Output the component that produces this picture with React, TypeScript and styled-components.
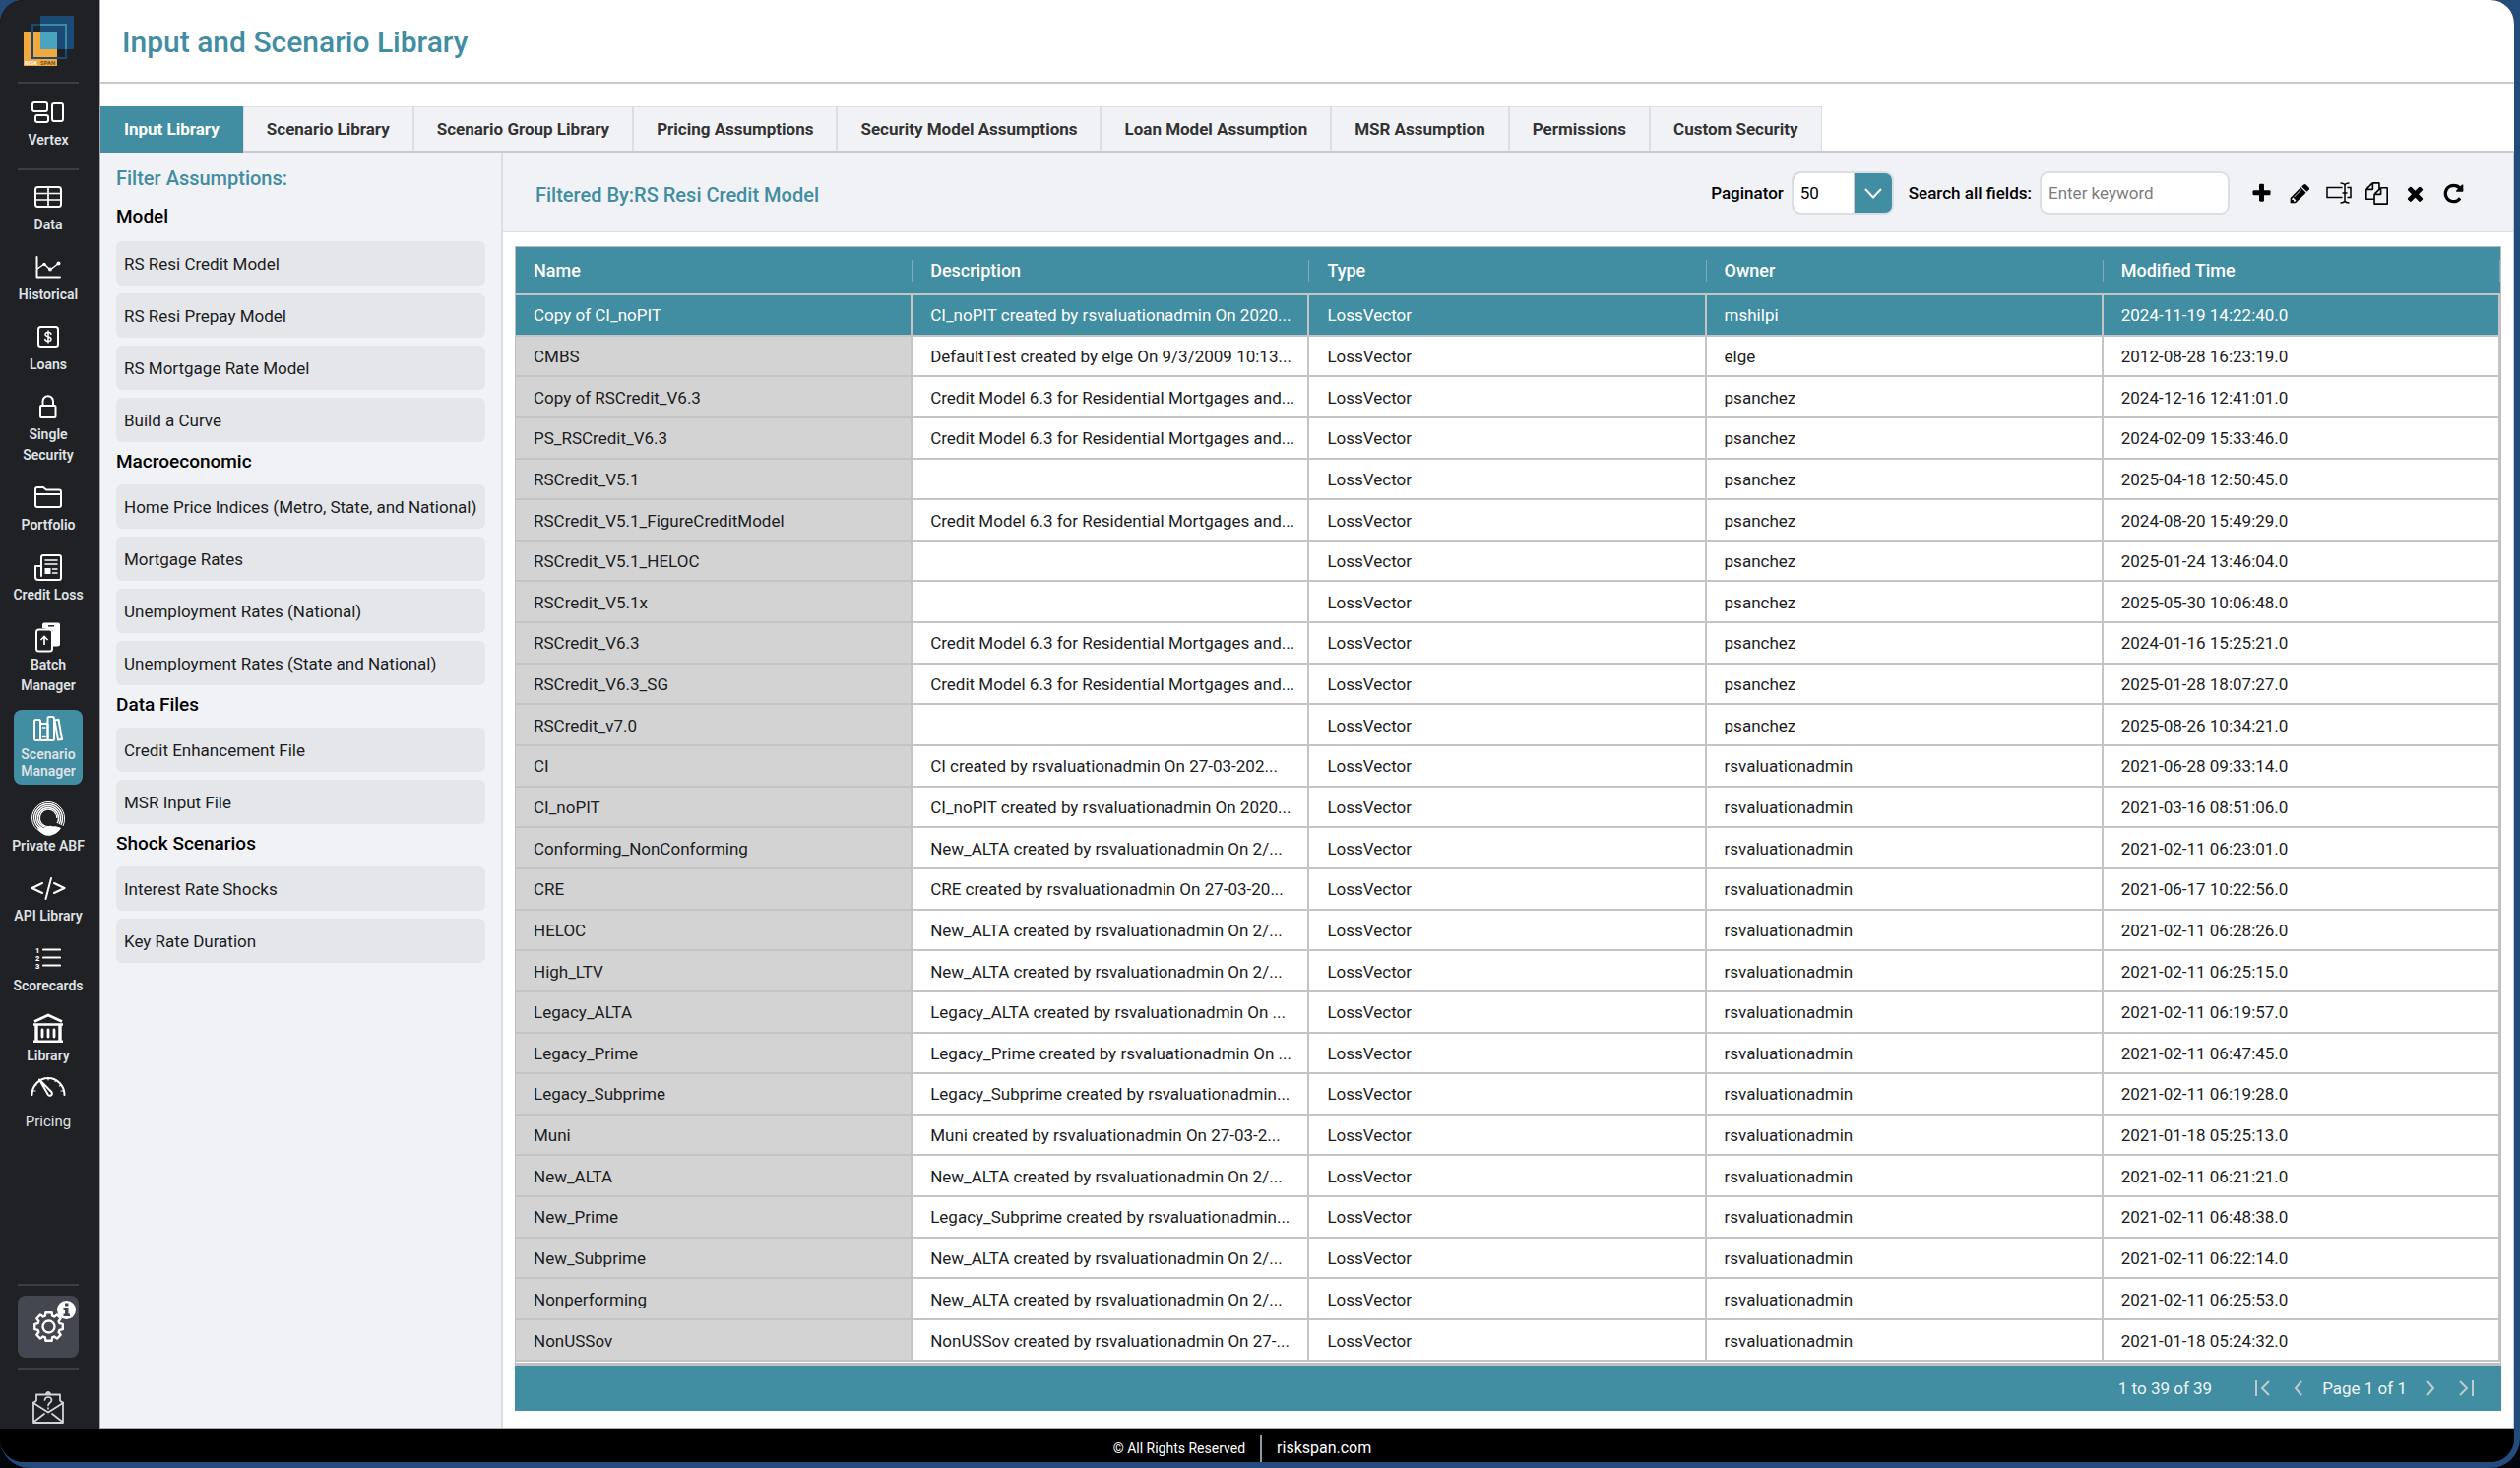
import React from "react";
import styled, { createGlobalStyle, css } from "styled-components";

const teal = "#418da1";
const panel = "#f1f2f6";
const line = "#dcdee6";
const rule = "#cacaca";
const grid = "#c4c4c4";
const ink = "#1b1c1e";

const GlobalStyle = createGlobalStyle`
  *, *::before, *::after { box-sizing: border-box; }
  body { margin: 0; background: #03050c; font-family: Roboto, "Noto Sans", sans-serif; color: ${ink}; }
  button, input, select { font: inherit; color: inherit; }
  a { color: inherit; text-decoration: none; }
  h1, h2, h3, ul { margin: 0; padding: 0; }
  ul { list-style: none; }
`;

const Desktop = styled.div`
  height: 100vh;
  padding-right: 6px;
  padding-bottom: 6px;
  background: #234b7c;
  border-radius: 0 0 30px 30px;
`;

const Shell = styled.div`
  height: 100%;
  display: flex;
  flex-direction: column;
  overflow: hidden;
  border-radius: 24px;
  background: #000;
`;

const Columns = styled.div`
  flex: 1;
  min-height: 0;
  display: flex;
`;

/* ---------- Sidebar ---------- */

const Sidebar = styled.nav`
  flex: none;
  width: 101px;
  padding: 16px 3px 4px 0;
  display: flex;
  flex-direction: column;
  align-items: center;
  background: #202125;
  color: #dfe1e5;
`;

const Divider = styled.hr<{ $top: number; $bottom: number }>`
  width: 62px;
  height: 2px;
  border: 0;
  background: #3b3d42;
  margin: ${(p) => p.$top}px 0 ${(p) => p.$bottom}px;
`;

const NavItem = styled.a<{ $active?: boolean; $plain?: boolean }>`
  display: flex;
  flex-direction: column;
  align-items: center;
  margin-bottom: 14px;
  text-align: center;
  font-size: 14px;
  line-height: 21px;
  font-weight: 600;
  white-space: pre-line;
  ${(p) =>
    p.$plain &&
    css`
      margin-top: -4px;
      font-size: 15px;
      font-weight: 400;
    `}
  ${(p) =>
    p.$active &&
    css`
      width: 70px;
      margin-bottom: 16px;
      padding: 1px 0 5px;
      line-height: 17px;
      border-radius: 8px;
      background: ${teal};
    `}
`;

const NavIcon = styled.span`
  height: 36px;
  display: flex;
  align-items: center;
  justify-content: center;
  color: #fff;
`;

const Spacer = styled.div`
  flex: 1;
`;

const GearButton = styled.button`
  position: relative;
  width: 62px;
  height: 63px;
  padding: 0;
  border: 0;
  border-radius: 8px;
  background: #44474f;
  color: #fff;
  display: grid;
  place-items: center;
`;

const InfoBadge = styled.span`
  position: absolute;
  top: 5px;
  right: 3px;
  display: block;
  height: 19px;
`;

const MailLink = styled.a`
  display: block;
  height: 34px;
  color: #d2d4d6;
`;

/* ---------- Page ---------- */

const Page = styled.div`
  flex: 1;
  min-width: 0;
  display: flex;
  flex-direction: column;
  background: #fff;
  border-left: 1px solid #a9a9ab;
  border-bottom: 1px solid #a9a9ab;
`;

const Header = styled.header`
  height: 85px;
  padding: 2px 22px 0;
  display: flex;
  align-items: center;
  border-bottom: 2px solid ${rule};
`;

const Title = styled.h1`
  font-size: 30px;
  line-height: 36px;
  font-weight: 500;
  color: ${teal};
`;

const Tabs = styled.div`
  margin-top: 23px;
  display: flex;
  border-bottom: 2px solid ${rule};
`;

const Tab = styled.button<{ $active?: boolean }>`
  height: 45px;
  padding: 0 23px;
  border: 1px solid ${line};
  border-bottom: 0;
  background: ${panel};
  color: #333;
  font-size: 17px;
  font-weight: 700;
  ${(p) =>
    p.$active &&
    css`
      height: 47px;
      margin-bottom: -2px;
      padding-bottom: 2px;
      border-color: ${teal};
      background: ${teal};
      color: #fff;
    `}
`;

const Body = styled.div`
  flex: 1;
  min-height: 0;
  display: flex;
`;

const Filters = styled.aside`
  flex: none;
  width: 409px;
  padding: 9px 16px 0;
  background: ${panel};
  border-right: 2px solid ${line};
`;

const FiltersTitle = styled.h2`
  font-size: 20px;
  line-height: 34px;
  font-weight: 500;
  color: ${teal};
`;

const GroupTitle = styled.h3`
  margin-bottom: 3px;
  font-size: 19px;
  line-height: 40px;
  font-weight: 500;
  color: #000;
  &:first-of-type { line-height: 44px; }
`;

const FilterList = styled.ul`
  display: grid;
  gap: 8px;
`;

const FilterButton = styled.button`
  display: block;
  width: 375px;
  height: 45px;
  padding: 0 8px;
  border: 0;
  border-radius: 6px;
  background: #e5e6e9;
  text-align: left;
  font-size: 17px;
`;

const Main = styled.main`
  flex: 1;
  min-width: 0;
  display: flex;
  flex-direction: column;
  border-right: 1px solid ${rule};
`;

const Toolbar = styled.div`
  height: 81px;
  padding: 2px 48px 0 33px;
  display: flex;
  align-items: center;
  background: ${panel};
  border-bottom: 1px solid ${line};
`;

const ToolbarTitle = styled.h2`
  flex: 1;
  padding-top: 3px;
  font-size: 20px;
  font-weight: 500;
  color: ${teal};
`;

const FieldLabel = styled.label`
  margin-right: 8px;
  font-size: 17px;
  font-weight: 500;
  color: #000;
`;

const SelectBox = styled.div`
  display: flex;
  width: 104px;
  height: 44px;
  margin-right: 15px;
  overflow: hidden;
  border: 2px solid ${line};
  border-radius: 9px;
  background: ${teal};
`;

const Select = styled.select`
  width: 62px;
  padding: 0 7px;
  border: 0;
  border-right: 1px solid ${rule};
  appearance: none;
  background: #fff;
  color: #000;
  font-size: 17px;
`;

const SelectArrow = styled.span`
  flex: 1;
  display: grid;
  place-items: center;
  color: #fff;
`;

const SearchInput = styled.input`
  width: 193px;
  height: 44px;
  margin-right: 20px;
  padding: 0 7px;
  border: 2px solid ${line};
  border-radius: 9px;
  background: #fff;
  font-size: 17px;
  &::placeholder { color: #7d7d7d; opacity: 1; }
`;

const Actions = styled.div`
  display: flex;
  gap: 14px;
`;

const IconButton = styled.button`
  width: 25px;
  height: 25px;
  padding: 0;
  border: 0;
  background: none;
  color: #000;
  display: grid;
  place-items: center;
`;

const GridArea = styled.div`
  flex: 1;
  min-height: 0;
  padding: 14px 12px 17px;
  display: flex;
  flex-direction: column;
`;

const GridBox = styled.div`
  flex: 1;
  min-height: 0;
  padding-bottom: 1px;
  border: 1px solid #b9bdbf;
  border-bottom: 3px solid #bfc0c0;
`;

const Table = styled.table`
  width: 100%;
  height: 100%;
  border-collapse: separate;
  border-spacing: 0;
  table-layout: fixed;
  font-size: 17px;
  line-height: 22px;
`;

const HeadCell = styled.th`
  height: 49px;
  padding: 0;
  background: ${teal};
  border-bottom: 2px solid ${grid};
  color: #fff;
  font-size: 18px;
  font-weight: 500;
  text-align: left;
`;

const HeadLabel = styled.span`
  display: block;
  padding-left: 18px;
  border-right: 1px solid #7fa9b5;
`;

const Cell = styled.td<{ $selected?: boolean; $name?: boolean }>`
  padding: 1px 0 0 18px;
  overflow: hidden;
  white-space: nowrap;
  border-right: 2px solid ${grid};
  border-bottom: 2px solid ${grid};
  background: ${(p) => (p.$selected ? teal : p.$name ? "#d3d3d3" : "#fff")};
  color: ${(p) => (p.$selected ? "#fff" : ink)};
`;

const Pager = styled.div`
  flex: none;
  height: 46px;
  padding: 0 24px;
  display: flex;
  align-items: center;
  justify-content: flex-end;
  gap: 12px;
  background: ${teal};
  color: #eef4f6;
  font-size: 17px;
`;

const PagerCount = styled.span`
  margin-right: 28px;
`;

const PagerButton = styled.button`
  width: 24px;
  height: 24px;
  padding: 0;
  border: 0;
  background: none;
  color: #c0cbd0;
`;

const Footer = styled.footer`
  flex: none;
  height: 34px;
  display: flex;
  align-items: center;
  justify-content: center;
  gap: 15px;
  padding: 6px 30px 0 0;
  background: #000;
  color: #fff;
  font-size: 14px;
  line-height: 28px;
  a { padding-left: 15px; border-left: 2px solid #8a9aa3; font-size: 16px; }
`;

/* ---------- Icons ---------- */

type IconProps = { w: number; h: number; children: React.ReactNode; sw?: number };
const Stroke = ({ w, h, children, sw = 2 }: IconProps) => (
  <svg width={w} height={h} viewBox={`0 0 ${w} ${h}`} fill="none" stroke="currentColor" strokeWidth={sw} strokeLinejoin="round" strokeLinecap="round" aria-hidden="true">
    {children}
  </svg>
);

const Logo = () => (
  <svg width="51" height="52" viewBox="0 0 51 52" role="img" aria-label="RiskSpan">
    <rect x="0" y="17" width="34" height="34" fill="#f1a93f" />
    <rect x="17" y="0" width="34" height="34" fill="#1b4a76" />
    <rect x="17" y="17" width="17" height="17" fill="#4aa4be" />
    <rect x="9" y="9" width="34" height="34" fill="none" stroke="#1b4a76" strokeWidth="2" />
    <path d="M17 9H43V17M43 9v25" fill="none" stroke="#3a8aa8" strokeWidth="2" />
    <text x="1" y="50" fontSize="6" fontWeight="700" fill="#fff">RISK</text>
    <text x="17" y="50" fontSize="6" fontWeight="700" fill="#6b5630">SPAN</text>
  </svg>
);

const VertexIcon = () => (
  <Stroke w={34} h={23}>
    <rect x="1" y="1" width="15" height="9" rx="2" />
    <rect x="4" y="14" width="13" height="7" rx="2" />
    <rect x="21" y="2" width="11" height="18" rx="2" />
  </Stroke>
);
const DataIcon = () => (
  <Stroke w={28} h={22}>
    <rect x="1" y="1" width="26" height="20" rx="2.5" />
    <path d="M1 7.500h26M1 14h26M14 1v20" strokeWidth="1.700" />
  </Stroke>
);
const HistoricalIcon = () => (
  <Stroke w={26} h={23}>
    <path d="M1.500 1v20.500H25" />
    <path d="M2 13l7-5 6 6 9-7" strokeWidth="1.500" />
    <circle cx="9" cy="8.500" r="1.700" fill="currentColor" stroke="none" />
    <circle cx="15" cy="13.500" r="2" fill="currentColor" stroke="none" />
    <circle cx="23.500" cy="7.500" r="2" fill="currentColor" stroke="none" />
  </Stroke>
);
const LoansIcon = () => (
  <Stroke w={22} h={22}>
    <rect x="1" y="1" width="20" height="20" rx="2.500" />
    <path d="M14 8.200c-.3-1.200-1.400-1.800-3-1.800s-3 .8-3 2.200c0 3 6 1.700 6 4.600 0 1.500-1.300 2.300-3 2.300s-2.900-.7-3.200-2M11 5v12" strokeWidth="1.500" />
  </Stroke>
);
const LockIcon = () => (
  <Stroke w={18} h={24}>
    <rect x="1" y="11" width="15.500" height="12" rx="1" />
    <path d="M3.500 11V6.500a5.200 5.200 0 0 1 10.500 0V11" />
  </Stroke>
);
const FolderIcon = () => (
  <Stroke w={28} h={22}>
    <path d="M1 19V3a2 2 0 0 1 2-2h6l3 2.500h13a2 2 0 0 1 2 2V19a2 2 0 0 1-2 2H3a2 2 0 0 1-2-2zM1 8h26" />
  </Stroke>
);
const NewsIcon = () => (
  <Stroke w={28} h={27}>
    <path d="M7 22V3a2 2 0 0 1 2-2h16a2 2 0 0 1 2 2v21a2 2 0 0 1-2 2H4a3 3 0 0 1-3-3V12h6" />
    <path d="M11 6h12M11 10h12M18.500 15H23M18.500 19H23" strokeWidth="1.500" />
    <rect x="10.500" y="14" width="6" height="6" fill="currentColor" stroke="none" />
  </Stroke>
);
const BatchIcon = () => (
  <svg width="26" height="31" viewBox="0 0 26 31" fill="none" aria-hidden="true">
    <path d="M7 6V2.500a2 2 0 0 1 2-2h14a2 2 0 0 1 2 2V22a2.500 2.500 0 0 1-2.500 2.500H18V8z" fill="currentColor" />
    <path d="M13 3.800h6" stroke="#202125" strokeWidth="1.500" />
    <rect x="1" y="7.500" width="16" height="22" rx="2.500" stroke="currentColor" strokeWidth="2" fill="#202125" />
    <path d="M9 23v-8M5.500 18L9 14.500l3.500 3.500" stroke="currentColor" strokeWidth="1.700" />
  </svg>
);
const BooksIcon = () => (
  <Stroke w={30} h={26}>
    <rect x="1" y="4" width="6" height="21" rx="1.500" />
    <rect x="7" y="8" width="7.500" height="17" rx="1" />
    <rect x="14.500" y="1" width="6.500" height="24" rx="1.500" />
    <path d="M21.500 4.500l4-.7L29 24l-4 .6z" />
    <path d="M9.500 12H12M9.500 21.500H12" strokeWidth="1.500" />
  </Stroke>
);
const SwirlIcon = () => (
  <svg width="36" height="36" viewBox="0 0 36 36" fill="none" stroke="currentColor" aria-hidden="true">
    <path d="M27 31A16.500 16.500 0 0 1 1.500 18a16.500 16.500 0 0 1 33 0 17 17 0 0 1-1.500 8" strokeWidth="1" />
    <path d="M25 29.500A14.500 14.500 0 0 1 3.500 18a14.500 14.500 0 0 1 29 0c0 3-.6 5-1.500 7" strokeWidth="1.400" />
    <path d="M24 28A12.500 12.500 0 0 1 5.500 18a12.500 12.500 0 0 1 25 0c0 2.500-.5 4.500-1.500 6" strokeWidth="1.400" />
    <path d="M22 27A10.500 10.500 0 0 1 7.500 18a10.500 10.500 0 0 1 21 0c0 2-.5 4-1.500 5" strokeWidth="1.500" />
    <path d="M21 26a8.700 8.700 0 1 1 5.700-8" strokeWidth="1.200" />
    <path d="M6 25c3 3 7 4 12 2 5-1.500 9-1 13 1-3 5-8 8-13.500 7.800C12 35.500 8 31 6 25z" fill="currentColor" stroke="none" />
  </svg>
);
const CodeIcon = () => (
  <Stroke w={36} h={23}>
    <path d="M12 6L1.500 11 12 16M24 6l10.500 5L24 16M21 1l-5.500 21" />
  </Stroke>
);
const ScoreIcon = () => (
  <svg width="26" height="22" viewBox="0 0 26 22" fill="currentColor" aria-hidden="true">
    <path d="M8 2.500h17M8 10.500h17M8 18.500h17" stroke="currentColor" strokeWidth="2.200" strokeLinecap="round" />
    <text x="0" y="6" fontSize="7.500" fontWeight="900">1</text>
    <text x="0" y="13.500" fontSize="7.500" fontWeight="900">2</text>
    <text x="0" y="21.500" fontSize="7.500" fontWeight="900">3</text>
  </svg>
);
const LibraryIcon = () => (
  <svg width="30" height="31" viewBox="0 0 30 31" fill="none" stroke="currentColor" aria-hidden="true">
    <path d="M1 8.500L15 2l14 6.500" strokeWidth="2.800" />
    <path d="M0 11.500h30M0 28.800h30" strokeWidth="2.600" />
    <path d="M3 11v18M27 11v18" strokeWidth="3.400" />
    <path d="M9 17v7M15 17v7M21 17v7" strokeWidth="2.800" strokeLinecap="round" />
  </svg>
);
const GaugeIcon = () => (
  <Stroke w={36} h={36}>
    <g transform="translate(0 -5)">
      <path d="M1.500 24a16.500 17 0 0 1 33 0" />
      <path d="M6 14l-1-.6M18 7v2M26 9l-1 1.500M31 14l-1.500 1M33 20h-2M3.500 20H5" strokeWidth="1.200" />
      <path d="M9 8.500l8.800 15.300a2 2 0 1 0 3.700-2.500z" strokeWidth="2" />
    </g>
  </Stroke>
);
const GearIcon = () => (
  <svg width="31" height="31" viewBox="0 0 30 30" fill="none" stroke="currentColor" strokeWidth="2.300" aria-hidden="true">
    <circle cx="15" cy="15" r="5.800" />
    <path strokeLinejoin="round" d="M12 1.200h6l.5 3.300 2 .8 2.700-2 3.600 3.700-2 2.700.9 2.100 3.100.6v5.200l-3.100.6-.9 2.100 2 2.700-3.600 3.700-2.700-2-2 .8-.5 3.300h-6l-.5-3.300-2-.8-2.700 2L3.200 23l2-2.700-.9-2.100-3.100-.6v-5.200l3.100-.6.9-2.100-2-2.700 3.600-3.700 2.700 2 2-.8z" />
  </svg>
);
const InfoIcon = () => (
  <svg width="19" height="19" viewBox="0 0 19 19" aria-hidden="true">
    <circle cx="9.500" cy="9.500" r="9.500" fill="#fff" />
    <path d="M8 2.500h3.500v3H8zM6.500 7.500h5v6H13V16H6.500v-2.500H8V10H6.500z" fill="#44474f" />
  </svg>
);
const MailIcon = () => (
  <Stroke w={32} h={33} sw={1.8}>
    <path d="M1 11.500V32h30V11.500M1 31.500L12 23M31 31.500L20 23" />
    <path d="M1 12l15 9.500L31 12l-3-2.500V3.500H4v6z" />
    <path d="M12.500 9c.2-2 1.500-3 3.500-3s3.500 1.200 3.500 3c0 2.500-3.500 3-3.500 5.500M16 17.200v.6" strokeWidth="1.700" />
    <path d="M13.500 3a2.500 2.500 0 0 1 5 0z" fill="currentColor" strokeWidth="1" />
  </Stroke>
);

const Glyph = ({ d, size = 23 }: { d: string; size?: number }) => (
  <svg width={size} height={size} viewBox="0 0 1792 1792" fill="currentColor" aria-hidden="true">
    <path d={d} />
  </svg>
);

const plusPath = "M1600 736v192q0 40-28 68t-68 28h-416v416q0 40-28 68t-68 28h-192q-40 0-68-28t-28-68v-416h-416q-40 0-68-28t-28-68v-192q0-40 28-68t68-28h416v-416q0-40 28-68t68-28h192q40 0 68 28t28 68v416h416q40 0 68 28t28 68z";
const pencilPath = "M491 1536l91-91-235-235-91 91v107h128v128h107zm523-928q0-22-22-22-10 0-17 7l-542 542q-7 7-7 17 0 22 22 22 10 0 17-7l542-542q7-7 7-17zm-54-192l416 416-832 832h-416v-416zm683 96q0 53-37 90l-166 166-416-416 166-165q36-38 90-38 53 0 91 38l235 234q37 39 37 91z";
const copyPath = "M1696 384q40 0 68 28t28 68v1216q0 40-28 68t-68 28h-960q-40 0-68-28t-28-68v-288h-544q-40 0-68-28t-28-68v-672q0-40 20-88t48-76l408-408q28-28 76-48t88-20h416q40 0 68 28t28 68v328q68-40 128-40h416zm-544 213l-299 299h299v-299zm-640-384l-299 299h299v-299zm196 647l316-316v-416h-384v416q0 40-28 68t-68 28h-416v640h512v-256q0-40 20-88t48-76zm956 804v-1152h-384v416q0 40-28 68t-68 28h-416v640h896z";
const timesPath = "M1490 1322q0 40-28 68l-136 136q-28 28-68 28t-68-28l-294-294-294 294q-28 28-68 28t-68-28l-136-136q-28-28-28-68t28-68l294-294-294-294q-28-28-28-68t28-68l136-136q28-28 68-28t68 28l294 294 294-294q28-28 68-28t68 28l136 136q28 28 28 68t-28 68l-294 294 294 294q28 28 28 68z";
const reloadPath = "M1664 256v448q0 26-19 45t-45 19h-448q-42 0-59-40-17-39 14-69l138-138q-148-137-349-137-104 0-198.500 40.500t-163.500 109.500-109.500 163.500-40.500 198.500 40.500 198.500 109.500 163.500 163.500 109.500 198.500 40.500q119 0 225-52t179-147q7-10 23-12 15 0 25 9l137 138q9 8 9.500 20.500t-7.500 22.500q-109 132-264 204.500t-327 72.500q-156 0-298-61t-245-164-164-245-61-298 61-298 164-245 245-164 298-61q147 0 284.500 55.500t244.500 156.500l130-129q29-31 70-14 39 17 39 59z";

const RenameIcon = () => (
  <svg width="26" height="22" viewBox="0 0 26 22" fill="none" stroke="currentColor" strokeWidth="1.500" aria-hidden="true">
    <path d="M16.500 5.500H1v10h15.500M21.500 5.500H25v10h-3.500" />
    <path d="M14.500 1c2.500 0 4 .5 4.500 2 .5-1.500 2-2 4.500-2M14.500 21c2.500 0 4-.5 4.500-2 .5 1.500 2 2 4.500 2M19 3v16M16.500 11h5" />
  </svg>
);

const Chevron = ({ d }: { d: string }) => (
  <svg width="24" height="24" viewBox="0 0 24 24" fill="none" stroke="currentColor" strokeWidth="2" aria-hidden="true">
    <path d={d} />
  </svg>
);

/* ---------- Data ---------- */

const nav = [
  { label: "Data", icon: <DataIcon /> },
  { label: "Historical", icon: <HistoricalIcon /> },
  { label: "Loans", icon: <LoansIcon /> },
  { label: "Single\nSecurity", icon: <LockIcon /> },
  { label: "Portfolio", icon: <FolderIcon /> },
  { label: "Credit Loss", icon: <NewsIcon /> },
  { label: "Batch\nManager", icon: <BatchIcon /> },
  { label: "Scenario\nManager", icon: <BooksIcon />, active: true },
  { label: "Private ABF", icon: <SwirlIcon /> },
  { label: "API Library", icon: <CodeIcon /> },
  { label: "Scorecards", icon: <ScoreIcon /> },
  { label: "Library", icon: <LibraryIcon /> },
  { label: "Pricing", icon: <GaugeIcon />, plain: true },
];

const tabs = [
  "Input Library", "Scenario Library", "Scenario Group Library", "Pricing Assumptions",
  "Security Model Assumptions", "Loan Model Assumption", "MSR Assumption", "Permissions", "Custom Security",
];

const groups = [
  { title: "Model", items: ["RS Resi Credit Model", "RS Resi Prepay Model", "RS Mortgage Rate Model", "Build a Curve"] },
  { title: "Macroeconomic", items: ["Home Price Indices (Metro, State, and National)", "Mortgage Rates", "Unemployment Rates (National)", "Unemployment Rates (State and National)"] },
  { title: "Data Files", items: ["Credit Enhancement File", "MSR Input File"] },
  { title: "Shock Scenarios", items: ["Interest Rate Shocks", "Key Rate Duration"] },
];

const credit = "Credit Model 6.3 for Residential Mortgages and...";
const rows: [string, string, string, string][] = [
  ["Copy of CI_noPIT", "CI_noPIT created by rsvaluationadmin On 2020...", "mshilpi", "2024-11-19 14:22:40.0"],
  ["CMBS", "DefaultTest created by elge On 9/3/2009 10:13...", "elge", "2012-08-28 16:23:19.0"],
  ["Copy of RSCredit_V6.3", credit, "psanchez", "2024-12-16 12:41:01.0"],
  ["PS_RSCredit_V6.3", credit, "psanchez", "2024-02-09 15:33:46.0"],
  ["RSCredit_V5.1", "", "psanchez", "2025-04-18 12:50:45.0"],
  ["RSCredit_V5.1_FigureCreditModel", credit, "psanchez", "2024-08-20 15:49:29.0"],
  ["RSCredit_V5.1_HELOC", "", "psanchez", "2025-01-24 13:46:04.0"],
  ["RSCredit_V5.1x", "", "psanchez", "2025-05-30 10:06:48.0"],
  ["RSCredit_V6.3", credit, "psanchez", "2024-01-16 15:25:21.0"],
  ["RSCredit_V6.3_SG", credit, "psanchez", "2025-01-28 18:07:27.0"],
  ["RSCredit_v7.0", "", "psanchez", "2025-08-26 10:34:21.0"],
  ["CI", "CI created by rsvaluationadmin On 27-03-202...", "rsvaluationadmin", "2021-06-28 09:33:14.0"],
  ["CI_noPIT", "CI_noPIT created by rsvaluationadmin On 2020...", "rsvaluationadmin", "2021-03-16 08:51:06.0"],
  ["Conforming_NonConforming", "New_ALTA created by rsvaluationadmin On 2/...", "rsvaluationadmin", "2021-02-11 06:23:01.0"],
  ["CRE", "CRE created by rsvaluationadmin On 27-03-20...", "rsvaluationadmin", "2021-06-17 10:22:56.0"],
  ["HELOC", "New_ALTA created by rsvaluationadmin On 2/...", "rsvaluationadmin", "2021-02-11 06:28:26.0"],
  ["High_LTV", "New_ALTA created by rsvaluationadmin On 2/...", "rsvaluationadmin", "2021-02-11 06:25:15.0"],
  ["Legacy_ALTA", "Legacy_ALTA created by rsvaluationadmin On ...", "rsvaluationadmin", "2021-02-11 06:19:57.0"],
  ["Legacy_Prime", "Legacy_Prime created by rsvaluationadmin On ...", "rsvaluationadmin", "2021-02-11 06:47:45.0"],
  ["Legacy_Subprime", "Legacy_Subprime created by rsvaluationadmin...", "rsvaluationadmin", "2021-02-11 06:19:28.0"],
  ["Muni", "Muni created by rsvaluationadmin On 27-03-2...", "rsvaluationadmin", "2021-01-18 05:25:13.0"],
  ["New_ALTA", "New_ALTA created by rsvaluationadmin On 2/...", "rsvaluationadmin", "2021-02-11 06:21:21.0"],
  ["New_Prime", "Legacy_Subprime created by rsvaluationadmin...", "rsvaluationadmin", "2021-02-11 06:48:38.0"],
  ["New_Subprime", "New_ALTA created by rsvaluationadmin On 2/...", "rsvaluationadmin", "2021-02-11 06:22:14.0"],
  ["Nonperforming", "New_ALTA created by rsvaluationadmin On 2/...", "rsvaluationadmin", "2021-02-11 06:25:53.0"],
  ["NonUSSov", "NonUSSov created by rsvaluationadmin On 27-...", "rsvaluationadmin", "2021-01-18 05:24:32.0"],
];

export default function App() {
  return (
    <>
      <GlobalStyle />
      <Desktop>
        <Shell>
          <Columns>
            <Sidebar aria-label="Main">
              <Logo />
              <Divider $top={15} $bottom={11} />
              <NavItem href="#">
                <NavIcon><VertexIcon /></NavIcon>
                Vertex
              </NavItem>
              <Divider $top={4} $bottom={9} />
              {nav.map((n) => (
                <NavItem key={n.label} href="#" $active={n.active} $plain={n.plain}>
                  <NavIcon>{n.icon}</NavIcon>
                  {n.label}
                </NavItem>
              ))}
              <Spacer />
              <Divider $top={0} $bottom={10} />
              <GearButton type="button" aria-label="Settings">
                <GearIcon />
                <InfoBadge><InfoIcon /></InfoBadge>
              </GearButton>
              <Divider $top={10} $bottom={22} />
              <MailLink href="#" aria-label="Support"><MailIcon /></MailLink>
            </Sidebar>
            <Page>
              <Header>
                <Title>Input and Scenario Library</Title>
              </Header>
              <Tabs role="tablist">
                {tabs.map((t, i) => (
                  <Tab key={t} type="button" role="tab" aria-selected={i === 0} $active={i === 0}>{t}</Tab>
                ))}
              </Tabs>
              <Body>
                <Filters>
                  <FiltersTitle>Filter Assumptions:</FiltersTitle>
                  {groups.map((g) => (
                    <React.Fragment key={g.title}>
                      <GroupTitle>{g.title}</GroupTitle>
                      <FilterList>
                        {g.items.map((item) => (
                          <li key={item}><FilterButton type="button">{item}</FilterButton></li>
                        ))}
                      </FilterList>
                    </React.Fragment>
                  ))}
                </Filters>
                <Main>
                  <Toolbar>
                    <ToolbarTitle>Filtered By:RS Resi Credit Model</ToolbarTitle>
                    <FieldLabel htmlFor="page-size">Paginator</FieldLabel>
                    <SelectBox>
                      <Select id="page-size" defaultValue="50">
                        <option>50</option>
                        <option>100</option>
                      </Select>
                      <SelectArrow><Chevron d="M4 8l8 8.500L20 8" /></SelectArrow>
                    </SelectBox>
                    <FieldLabel htmlFor="search">Search all fields:</FieldLabel>
                    <SearchInput id="search" type="text" placeholder="Enter keyword" />
                    <Actions>
                      <IconButton type="button" aria-label="Add"><Glyph d={plusPath} /></IconButton>
                      <IconButton type="button" aria-label="Edit"><Glyph d={pencilPath} /></IconButton>
                      <IconButton type="button" aria-label="Rename"><RenameIcon /></IconButton>
                      <IconButton type="button" aria-label="Copy"><Glyph d={copyPath} /></IconButton>
                      <IconButton type="button" aria-label="Delete"><Glyph d={timesPath} /></IconButton>
                      <IconButton type="button" aria-label="Refresh"><Glyph d={reloadPath} /></IconButton>
                    </Actions>
                  </Toolbar>
                  <GridArea>
                    <GridBox>
                      <Table>
                        <thead>
                          <tr>
                            {["Name", "Description", "Type", "Owner", "Modified Time"].map((h) => (
                              <HeadCell key={h} scope="col"><HeadLabel>{h}</HeadLabel></HeadCell>
                            ))}
                          </tr>
                        </thead>
                        <tbody>
                          {rows.map(([name, description, owner, time], i) => (
                            <tr key={name}>
                              <Cell $name $selected={i === 0}>{name}</Cell>
                              <Cell $selected={i === 0}>{description}</Cell>
                              <Cell $selected={i === 0}>LossVector</Cell>
                              <Cell $selected={i === 0}>{owner}</Cell>
                              <Cell $selected={i === 0}>{time}</Cell>
                            </tr>
                          ))}
                        </tbody>
                      </Table>
                    </GridBox>
                    <Pager>
                      <PagerCount>1 to 39 of 39</PagerCount>
                      <PagerButton type="button" aria-label="First page"><Chevron d="M5 4v16M18 5l-7 7 7 7" /></PagerButton>
                      <PagerButton type="button" aria-label="Previous page"><Chevron d="M15 5l-6 7 6 7" /></PagerButton>
                      <span>Page 1 of 1</span>
                      <PagerButton type="button" aria-label="Next page"><Chevron d="M9 5l6 7-6 7" /></PagerButton>
                      <PagerButton type="button" aria-label="Last page"><Chevron d="M6 5l7 7-7 7M19 4v16" /></PagerButton>
                    </Pager>
                  </GridArea>
                </Main>
              </Body>
            </Page>
          </Columns>
          <Footer>
            <span>© All Rights Reserved</span>
            <a href="#">riskspan.com</a>
          </Footer>
        </Shell>
      </Desktop>
    </>
  );
}
